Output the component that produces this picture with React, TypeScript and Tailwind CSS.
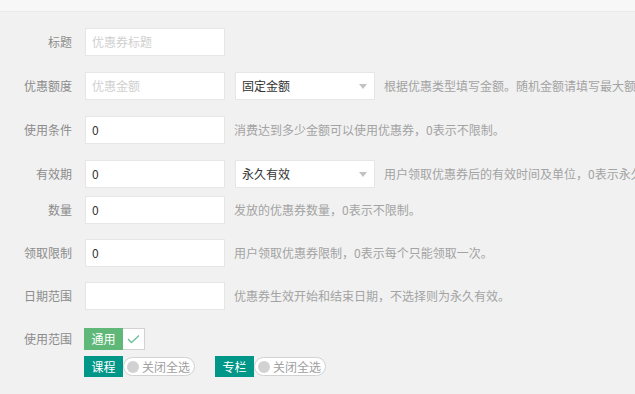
import React from "react";

const font = { fontFamily: '"Noto Sans CJK SC", "Noto Sans", sans-serif' };

function Label({ children }: { children: React.ReactNode }) {
  return <div className="w-[72px] shrink-0 text-right text-[12px] text-[#8c8c8c] leading-none">{children}</div>;
}

function Input({ value, placeholder }: { value?: string; placeholder?: string }) {
  return (
    <div className="w-[140px] h-[28px] shrink-0 bg-white border border-[#e6e6e6] flex items-center pl-[6px] text-[12px] leading-none">
      {value !== undefined ? (
        <span className="text-[#333]">{value}</span>
      ) : (
        <span className="text-[#d0d0d0]">{placeholder}</span>
      )}
    </div>
  );
}

function Select({ value }: { value: string }) {
  return (
    <div className="w-[140px] h-[28px] shrink-0 bg-white border border-[#e6e6e6] flex items-center justify-between pl-[6px] pr-[7px] text-[12px] leading-none">
      <span className="text-[#333]">{value}</span>
      <svg width="8" height="5" viewBox="0 0 8 5">
        <path d="M0 0 L8 0 L4 5 Z" fill="#c2c2c2" />
      </svg>
    </div>
  );
}

function Help({ children }: { children: React.ReactNode }) {
  return <div className="text-[12px] text-[#a3a3a3] whitespace-nowrap leading-none">{children}</div>;
}

function Toggle() {
  return (
    <div className="w-[72px] h-[19px] rounded-full border border-[#d2d2d2] bg-white flex items-center pl-[3px] gap-[3px]">
      <div className="w-[12px] h-[12px] rounded-full bg-[#d2d2d2]" />
      <span className="text-[12px] text-[#a0a0a0] leading-none">关闭全选</span>
    </div>
  );
}

export default function App() {
  return (
    <div className="w-[635px] h-[394px] bg-[#f1f1f1] overflow-hidden" style={font}>
      <div className="h-[12px] bg-[#f7f7f7] border-b border-[#e9e9e9]" />
      <div className="pt-[16px] flex flex-col">
        <div className="flex items-center gap-[13px] mb-[16px]">
          <Label>标题</Label>
          <Input placeholder="优惠券标题" />
        </div>
        <div className="flex items-center gap-[13px] mb-[16px]">
          <Label>优惠额度</Label>
          <div className="flex items-center">
            <Input placeholder="优惠金额" />
            <div className="ml-[10px]"><Select value="固定金额" /></div>
            <div className="ml-[9px]"><Help>根据优惠类型填写金额。随机金额请填写最大额度</Help></div>
          </div>
        </div>
        <div className="flex items-center gap-[13px] mb-[16px]">
          <Label>使用条件</Label>
          <div className="flex items-center">
            <Input value="0" />
            <div className="ml-[9px]"><Help>消费达到多少金额可以使用优惠券，0表示不限制。</Help></div>
          </div>
        </div>
        <div className="flex items-center gap-[13px] mb-[8px]">
          <Label>有效期</Label>
          <div className="flex items-center">
            <Input value="0" />
            <div className="ml-[10px]"><Select value="永久有效" /></div>
            <div className="ml-[9px]"><Help>用户领取优惠券后的有效时间及单位，0表示永久有效。</Help></div>
          </div>
        </div>
        <div className="flex items-center gap-[13px] mb-[15px]">
          <Label>数量</Label>
          <div className="flex items-center">
            <Input value="0" />
            <div className="ml-[9px]"><Help>发放的优惠券数量，0表示不限制。</Help></div>
          </div>
        </div>
        <div className="flex items-center gap-[13px] mb-[15px]">
          <Label>领取限制</Label>
          <div className="flex items-center">
            <Input value="0" />
            <div className="ml-[9px]"><Help>用户领取优惠券限制，0表示每个只能领取一次。</Help></div>
          </div>
        </div>
        <div className="flex items-center gap-[13px] mb-[18px]">
          <Label>日期范围</Label>
          <div className="flex items-center">
            <Input value="" />
            <div className="ml-[9px]"><Help>优惠券生效开始和结束日期，不选择则为永久有效。</Help></div>
          </div>
        </div>
        <div className="flex items-start gap-[12px]">
          <div className="h-[22px] flex items-center"><Label>使用范围</Label></div>
          <div className="flex flex-col gap-[6px]">
            <div className="flex items-center">
              <div className="w-[39px] h-[22px] bg-[#5fb878] text-white text-[12px] flex items-center justify-center leading-none">通用</div>
              <div className="w-[22px] h-[22px] bg-white border border-[#d2d2d2] border-l-0 flex items-center justify-center">
                <svg width="13" height="10" viewBox="0 0 13 10">
                  <path d="M1 5 L4.5 8.5 L12 1.5" fill="none" stroke="#6cbf9a" strokeWidth="1.3" />
                </svg>
              </div>
            </div>
            <div className="flex items-center">
              <div className="w-[39px] h-[21px] bg-[#009688] text-white text-[12px] flex items-center justify-center leading-none">课程</div>
              <Toggle />
              <div className="w-[39px] h-[21px] ml-[20px] bg-[#009688] text-white text-[12px] flex items-center justify-center leading-none">专栏</div>
              <Toggle />
            </div>
          </div>
        </div>
      </div>
    </div>
  );
}
